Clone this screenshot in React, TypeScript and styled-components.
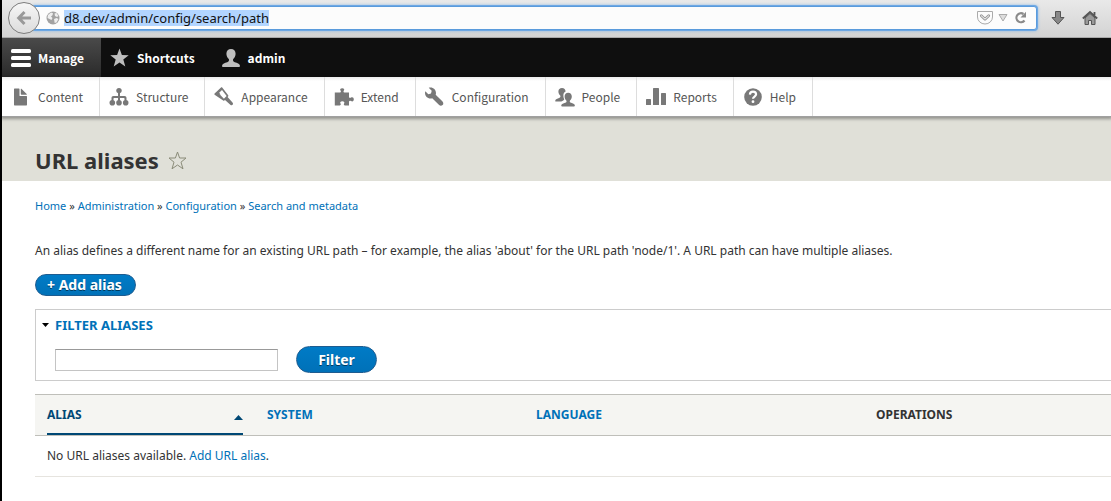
import React from "react";
import styled, { createGlobalStyle, css } from "styled-components";

const sans = '"Noto Sans", "Open Sans", sans-serif';
const toolbarSans = '"Noto Sans CJK SC", "Noto Sans", sans-serif';

const GlobalStyle = createGlobalStyle`
  *, *::before, *::after { box-sizing: border-box; }
  html { background: #fff; }
  body {
    margin: 0;
    overflow-x: hidden;
    color: #333;
    font: 12px/20px ${sans};
  }
  a { color: #0071b8; text-decoration: none; }
`;

const Window = styled.div`
  min-height: 100vh;
  border-left: 2px solid #000;
  background: #fff;
`;

/* Browser chrome */

const BrowserBar = styled.header`
  display: flex;
  align-items: center;
  height: 38px;
  padding: 0 13px 2px 6px;
  background: linear-gradient(#e9e9e9, #d3d3d3);
  border-bottom: 1px solid #a9a9a9;
`;

const BackButton = styled.button`
  display: grid;
  place-items: center;
  flex: none;
  z-index: 1;
  width: 32px;
  height: 32px;
  padding: 0;
  border: 1px solid #7d7d7d;
  border-radius: 50%;
  background: linear-gradient(#f6f6f6, #dcdcdc);
`;

const AddressField = styled.div`
  display: flex;
  flex: 1;
  align-items: center;
  gap: 4px;
  height: 24px;
  margin-left: -8px;
  padding: 0 7px 0 13px;
  border: 1px solid #5a9bdc;
  border-radius: 3px;
  background: #fcfcfc;
  box-shadow: 0 0 0 1px #6ea8e4, 0 0 3px 1px #8dbbe8;
`;

const AddressInput = styled.input`
  flex: none;
  field-sizing: content;
  height: 16px;
  padding: 0;
  border: 0;
  outline: 0;
  background: #b2d5ff;
  color: #111;
  font: 13px/16px ${sans};
`;

const Spacer = styled.span`
  flex: 1;
`;

const IconButton = styled.button`
  display: grid;
  place-items: center;
  flex: none;
  padding: 0;
  border: 0;
  background: none;
`;

const BrowserActions = styled.div`
  display: flex;
  gap: 16px;
  margin-left: 13px;
`;

/* Administration toolbar */

const ToolbarBar = styled.nav`
  display: flex;
  height: 39px;
  background: #0f0f0f;
`;

const ToolbarTab = styled.a<{ $active?: boolean }>`
  display: flex;
  align-items: center;
  gap: 7px;
  padding: 0 17px 0 9px;
  color: #fff;
  font: bold 12px/20px ${toolbarSans};
  ${({ $active }) =>
    $active &&
    css`
      background: linear-gradient(#4a4a4a, #2a2a2a);
    `}
`;

const Tray = styled.nav`
  display: flex;
  position: relative;
  height: 40px;
  border-bottom: 1px solid #a0a0a0;
  background: linear-gradient(#ececec, #fff 4px);
  box-shadow: 0 1px 3px 1px rgba(0, 0, 0, 0.35);
`;

const TrayLink = styled.a`
  display: flex;
  align-items: center;
  gap: 7px;
  padding: 0 16px 0 9px;
  border-right: 1px solid #ddd;
  color: #565656;
  font: 12px/20px ${toolbarSans};
`;

/* Page */

const PageHeader = styled.header`
  display: flex;
  align-items: flex-end;
  gap: 9px;
  height: 64px;
  padding: 0 33px 5px;
  background: #e0e0d8;
`;

const Title = styled.h1`
  margin: 0;
  color: #333;
  font: bold 22px/32px ${sans};
`;

const StarButton = styled(IconButton)`
  height: 32px;
`;

const Main = styled.main`
  padding-left: 33px;
`;

const Breadcrumb = styled.nav`
  padding-top: 15px;
  font-size: 11px;
`;

const Intro = styled.p`
  margin: 25px 0 13px;
`;

const pill = css`
  display: inline-block;
  border: 1px solid #1e5c90;
  border-radius: 20px;
  background: linear-gradient(#007bc6, #0071b8);
  color: #fff;
  font-family: ${sans};
  font-weight: bold;
  text-align: center;
  text-shadow: 0 1px rgba(0, 0, 0, 0.5);
`;

const AddButton = styled.a`
  ${pill}
  padding: 0 13px 0 11px;
  color: #fff;
  font-size: 14px;
  line-height: 20px;
`;

const FilterButton = styled.button`
  ${pill}
  width: 81px;
  padding: 0;
  font-size: 14px;
  line-height: 25px;
`;

const FilterPanel = styled.details`
  margin-top: 13px;
  padding: 5px 19px 7px;
  border: 1px solid #ccc;
  border-right: 0;
`;

const FilterSummary = styled.summary`
  display: flex;
  align-items: center;
  gap: 6px;
  margin-left: -13px;
  color: #0071b8;
  font-size: 13px;
  font-weight: bold;
  list-style: none;
`;

const FilterForm = styled.form`
  display: flex;
  align-items: center;
  gap: 18px;
  margin-top: 11px;
`;

const FilterInput = styled.input`
  width: 223px;
  height: 22px;
  border: 1px solid #c4c4c4;
  border-top-color: #999;
  background: #fff;
  font: 12px/20px ${sans};
`;

const Table = styled.table`
  width: 100%;
  margin-top: 13px;
  border-collapse: collapse;
  table-layout: fixed;
`;

const Column = styled.col<{ $width?: number }>`
  ${({ $width }) => $width && `width: ${$width}px;`}
`;

const HeadCell = styled.th`
  height: 41px;
  padding: 0 12px;
  border-top: 1px solid #bfbfba;
  border-bottom: 1px solid #bfbfba;
  background: #f5f5f2;
  text-align: left;
  font-weight: bold;
`;

const SortLink = styled.a<{ $active?: boolean }>`
  display: flex;
  align-items: center;
  justify-content: space-between;
  height: 40px;
  ${({ $active }) =>
    $active &&
    css`
      padding-top: 2px;
      border-bottom: 2px solid #004875;
      color: #004875;
    `}
`;

const SortArrow = styled.svg`
  margin-top: 5px;
`;

const Cell = styled.td`
  height: 41px;
  padding: 0 12px;
  border-bottom: 1px solid #e6e4df;
`;

/* Icons */

const GlobeIcon = () => (
  <svg width="14" height="14" viewBox="0 0 14 14">
    <circle cx="7" cy="7" r="6.5" fill="#a2a2a2" />
    <path d="M2 4l3-2.500 2 .8-.5 2L5 5.500l1.500 1.500-1 2L3.500 8 1.500 7zM8.500 2.500l2-.5 2 3-1.500 1-2-1zM8 8l2.500-1 2 1-2 3.500-1.800.5z" fill="#eee" />
  </svg>
);

const ManageIcon = () => (
  <svg width="20" height="20" viewBox="0 0 20 20" fill="#fff">
    <rect y="1" width="20" height="4" rx="1.500" />
    <rect y="8" width="20" height="4" rx="1.500" />
    <rect y="15" width="20" height="4" rx="1.500" />
  </svg>
);

const ShortcutIcon = () => (
  <svg width="20" height="20" viewBox="0 0 20 20" fill="#bebebe">
    <path d="M9.500.5l2.400 6.500 6.800.2-5.400 4.200 2 7.100-5.800-4-5.800 4 2-7.100L.3 7.200l6.800-.2z" />
  </svg>
);

const personPath =
  "M10 1c2.800 0 4.600 1.800 4.600 4.700 0 2.200-1 4-2.400 5.300-.7 1.500.2 2.700 1.600 3.300 2.400.9 4.700 1.300 5.100 3.200.2.900-.2 1.500-.9 1.500H2c-.7 0-1.100-.6-.9-1.500.4-1.900 2.700-2.300 5.100-3.200 1.400-.6 2.300-1.800 1.600-3.300-1.400-1.300-2.400-3.100-2.400-5.300C5.400 2.800 7.200 1 10 1z";

const UserIcon = () => (
  <svg width="20" height="20" viewBox="0 0 20 20" fill="#bebebe">
    <path d={personPath} />
  </svg>
);

const TrayIcon = ({ children }: { children: React.ReactNode }) => (
  <svg width="20" height="20" viewBox="0 0 20 20" fill="#787878">
    {children}
  </svg>
);

const trayItems = [
  {
    label: "Content",
    icon: (
      <path d="M3.600 1.500h4.300c.4 0 .6.200.6.600v6.300c0 .4.200.6.600.6h6.300c.4 0 .6.200.6.600v8.200c0 .4-.2.700-.6.700H3.600c-.4 0-.6-.3-.6-.7V2.100c0-.4.200-.6.600-.6zM9.800 2c0-.4.300-.5.600-.2l5.300 5.300c.3.300.2.600-.2.600h-5c-.4 0-.7-.3-.7-.7z" />
    ),
  },
  {
    label: "Structure",
    icon: (
      <>
        <circle cx="10" cy="3.600" r="2.700" />
        <path d="M9 5h2v4h4.500c1.300 0 2 .8 2 2v3h-2v-2.500c0-.4-.2-.6-.6-.6H11V14H9v-3.100H5.100c-.4 0-.6.200-.6.600V14h-2v-3c0-1.200.7-2 2-2H9z" />
        <circle cx="3.300" cy="15.700" r="2.800" />
        <circle cx="10" cy="15.700" r="2.800" />
        <circle cx="16.700" cy="15.700" r="2.800" />
      </>
    ),
  },
  {
    label: "Appearance",
    icon: (
      <path
        fillRule="evenodd"
        d="M7 .6c.4-.4.800-.4 1.200 0l6 7.700c.3.400.2.800-.1 1.100l-.5.500 4.900 5.600c.7.900.7 1.700.1 2.300-.6.600-1.400.6-2.300-.1l-5.300-4.800-.7.500c-.4.400-.8.300-1.100 0L.6 7.700c-.4-.4-.4-.800 0-1.200zM8 2.900L5.200 5.700l1.500 2.100-1.300-.9 4.500 4.800 2.700-2.700z"
      />
    ),
  },
  {
    label: "Extend",
    icon: (
      <path d="M6 5.500c1.200-.3 1-1.300.5-2-.8-1.200-.2-2.300 1.700-2.300s2.500 1.100 1.700 2.300c-.5.700-.7 1.700.5 2H15v4.600c.4 1.100 1.300 1 2 .5 1.400-.9 2.800-.2 2.800 1.700S18.400 14.900 17 14c-.7-.5-1.600-.6-2 .4v4h-4.200c-1.300-.3-1.100-1.200-.7-1.800.8-1.200 0-2.300-1.800-2.300s-2.600 1.100-1.800 2.300c.4.600.6 1.500-.7 1.800H.8V5.500z" />
    ),
  },
  {
    label: "Configuration",
    icon: (
      <g transform="translate(0 .5) scale(1.220)">
        <path d="M14.416 11.586l-.01-.008v-.001l-5.656-5.656c.15-.449.252-.921.252-1.421 0-2.485-2.016-4.500-4.502-4.500-.505 0-.981.102-1.434.255l2.431 2.431-.588 2.196-2.196.588-2.445-2.445c-.162.464-.268.956-.268 1.475 0 2.486 2.014 4.500 4.500 4.500.5 0 .972-.102 1.421-.251l5.667 5.665c.781.781 2.047.781 2.828 0s.781-2.047 0-2.828z" />
      </g>
    ),
  },
  {
    label: "People",
    icon: (
      <>
        <path d="M7 .9c2.200 0 3.600 1.500 3.600 3.600-1.700.8-2.400 2.300-2.200 4.500.1 1.700.5 2.600.9 3.300-.5 1-1.500 1.500-3 2.200H.9c-.6 0-.8-.5-.6-1.100.4-1.500 2.100-1.800 3.800-2.500 1.200-.4 1.700-1.400 1.100-2.500-1.100-1-1.800-2.400-1.800-4C3.400 2.200 4.800.9 7 .9z" />
        <path d="M13.200 5.700c2.200 0 3.600 1.500 3.600 3.700 0 1.600-.7 3-1.800 4-.6 1.100 0 2 1.100 2.400 1.700.7 3.400 1 3.700 2.400.2.700-.1 1.200-.7 1.200H7c-.6 0-.9-.5-.7-1.200.4-1.400 2.200-1.700 3.900-2.400 1.200-.4 1.700-1.300 1.100-2.400-1.100-1-1.700-2.400-1.700-4 0-2.200 1.400-3.700 3.600-3.700z" />
      </>
    ),
  },
  {
    label: "Reports",
    icon: (
      <>
        <rect y="12" width="5" height="6" rx=".6" />
        <rect x="7" y="1" width="6" height="17" rx=".6" />
        <rect x="15" y="6" width="5" height="12" rx=".6" />
      </>
    ),
  },
  {
    label: "Help",
    icon: (
      <>
        <circle cx="10" cy="10" r="8.800" />
        <path d="M6.900 7.600C7 5.500 8.300 4.600 10 4.600s3.100 1 3.100 2.700c0 2.200-3.100 2.300-3.100 4.500" fill="none" stroke="#fff" strokeWidth="2.200" />
        <circle cx="10" cy="14.700" r="1.400" fill="#fff" />
      </>
    ),
  },
];

const crumbs = ["Home", "Administration", "Configuration", "Search and metadata"];

export default function App() {
  return (
    <>
      <GlobalStyle />
      <Window>
        <BrowserBar>
          <BackButton aria-label="Back">
            <svg width="16" height="16" viewBox="0 0 16 16" fill="none" stroke="#999" strokeWidth="3">
              <path d="M8.500 2L2.700 8l5.800 6M3 8h12" />
            </svg>
          </BackButton>
          <AddressField>
            <GlobeIcon />
            <AddressInput aria-label="Address" defaultValue="d8.dev/admin/config/search/path" />
            <Spacer />
            <IconButton aria-label="Save to Pocket">
              <svg width="16" height="14" viewBox="0 0 16 14" fill="none" stroke="#aaa">
                <path d="M.5.5h15V6a7.500 7 0 0 1-15 0z" />
                <path d="M4.300 4.800L8 8.200l3.700-3.400" stroke="#999" strokeWidth="2.800" strokeLinecap="round" strokeLinejoin="round" />
                <path d="M4.300 4.800L8 8.200l3.700-3.400" stroke="#fcfcfc" strokeLinecap="round" />
              </svg>
            </IconButton>
            <IconButton aria-label="Show history">
              <svg width="12" height="8" viewBox="0 0 12 8" fill="#ddd" stroke="#aaa">
                <path d="M2 .5h8L6 7z" />
              </svg>
            </IconButton>
            <IconButton aria-label="Reload">
              <svg width="16" height="14" viewBox="0 0 16 14">
                <path d="M11.500 9.500A4.500 4.500 0 1 1 10.500 3" fill="none" stroke="#8a8a8a" strokeWidth="2.200" />
                <path d="M13 .8v5.700H7.500z" fill="#8a8a8a" />
              </svg>
            </IconButton>
          </AddressField>
          <BrowserActions>
            <IconButton aria-label="Downloads">
              <svg width="16" height="16" viewBox="0 0 16 16" fill="#888" stroke="#555">
                <path d="M5.500 1.500h5v6H14l-6 6.700-6-6.700h3.500z" />
              </svg>
            </IconButton>
            <IconButton aria-label="Home page">
              <svg width="16" height="16" viewBox="0 0 16 16">
                <path d="M3 8l5-4.500L13 8v6.500H9.500v-4h-3v4H3z" fill="#999" stroke="#555" />
                <path d="M.8 8.500L8 2l7.200 6.500M12.500 2v3" fill="none" stroke="#555" strokeWidth="1.800" />
              </svg>
            </IconButton>
          </BrowserActions>
        </BrowserBar>

        <ToolbarBar aria-label="Administration">
          <ToolbarTab href="#manage" $active>
            <ManageIcon />
            Manage
          </ToolbarTab>
          <ToolbarTab href="#shortcuts">
            <ShortcutIcon />
            Shortcuts
          </ToolbarTab>
          <ToolbarTab href="#user">
            <UserIcon />
            admin
          </ToolbarTab>
        </ToolbarBar>
        <Tray aria-label="Manage">
          {trayItems.map(({ label, icon }) => (
            <TrayLink key={label} href={`#${label.toLowerCase()}`}>
              <TrayIcon>{icon}</TrayIcon>
              {label}
            </TrayLink>
          ))}
        </Tray>

        <PageHeader>
          <Title>URL aliases</Title>
          <StarButton aria-label="Add to shortcuts">
            <svg width="19" height="19" viewBox="0 0 19 19" fill="none" stroke="#8a8b78">
              <path d="M9.500 1l2.100 6h6.400l-5 4.200 2 6.600-5.500-3.800L4 17.800l2-6.600L1 7h6.400z" strokeLinejoin="round" />
            </svg>
          </StarButton>
        </PageHeader>

        <Main>
          <Breadcrumb aria-label="Breadcrumb">
            {crumbs.map((crumb, i) => (
              <React.Fragment key={crumb}>
                {i > 0 && " » "}
                <a href="#crumb">{crumb}</a>
              </React.Fragment>
            ))}
          </Breadcrumb>
          <Intro>
            An alias defines a different name for an existing URL path – for example, the alias 'about' for the URL path
            'node/1'. A URL path can have multiple aliases.
          </Intro>
          <AddButton href="#add">+ Add alias</AddButton>

          <FilterPanel open>
            <FilterSummary>
              <svg width="7" height="4" viewBox="0 0 7 4">
                <path d="M0 0h7L3.500 4z" />
              </svg>
              FILTER ALIASES
            </FilterSummary>
            <FilterForm onSubmit={(e) => e.preventDefault()}>
              <FilterInput type="text" aria-label="Path alias" />
              <FilterButton>Filter</FilterButton>
            </FilterForm>
          </FilterPanel>

          <Table>
            <colgroup>
              <Column $width={220} />
              <Column $width={269} />
              <Column $width={340} />
              <Column />
            </colgroup>
            <thead>
              <tr>
                <HeadCell aria-sort="ascending">
                  <SortLink href="#alias" $active>
                    ALIAS
                    <SortArrow width="9" height="5" viewBox="0 0 9 5" fill="#004875">
                      <path d="M0 5h9L4.500 0z" />
                    </SortArrow>
                  </SortLink>
                </HeadCell>
                <HeadCell>
                  <SortLink href="#system">SYSTEM</SortLink>
                </HeadCell>
                <HeadCell>
                  <SortLink href="#language">LANGUAGE</SortLink>
                </HeadCell>
                <HeadCell>OPERATIONS</HeadCell>
              </tr>
            </thead>
            <tbody>
              <tr>
                <Cell colSpan={4}>
                  No URL aliases available. <a href="#add">Add URL alias</a>.
                </Cell>
              </tr>
            </tbody>
          </Table>
        </Main>
      </Window>
    </>
  );
}
